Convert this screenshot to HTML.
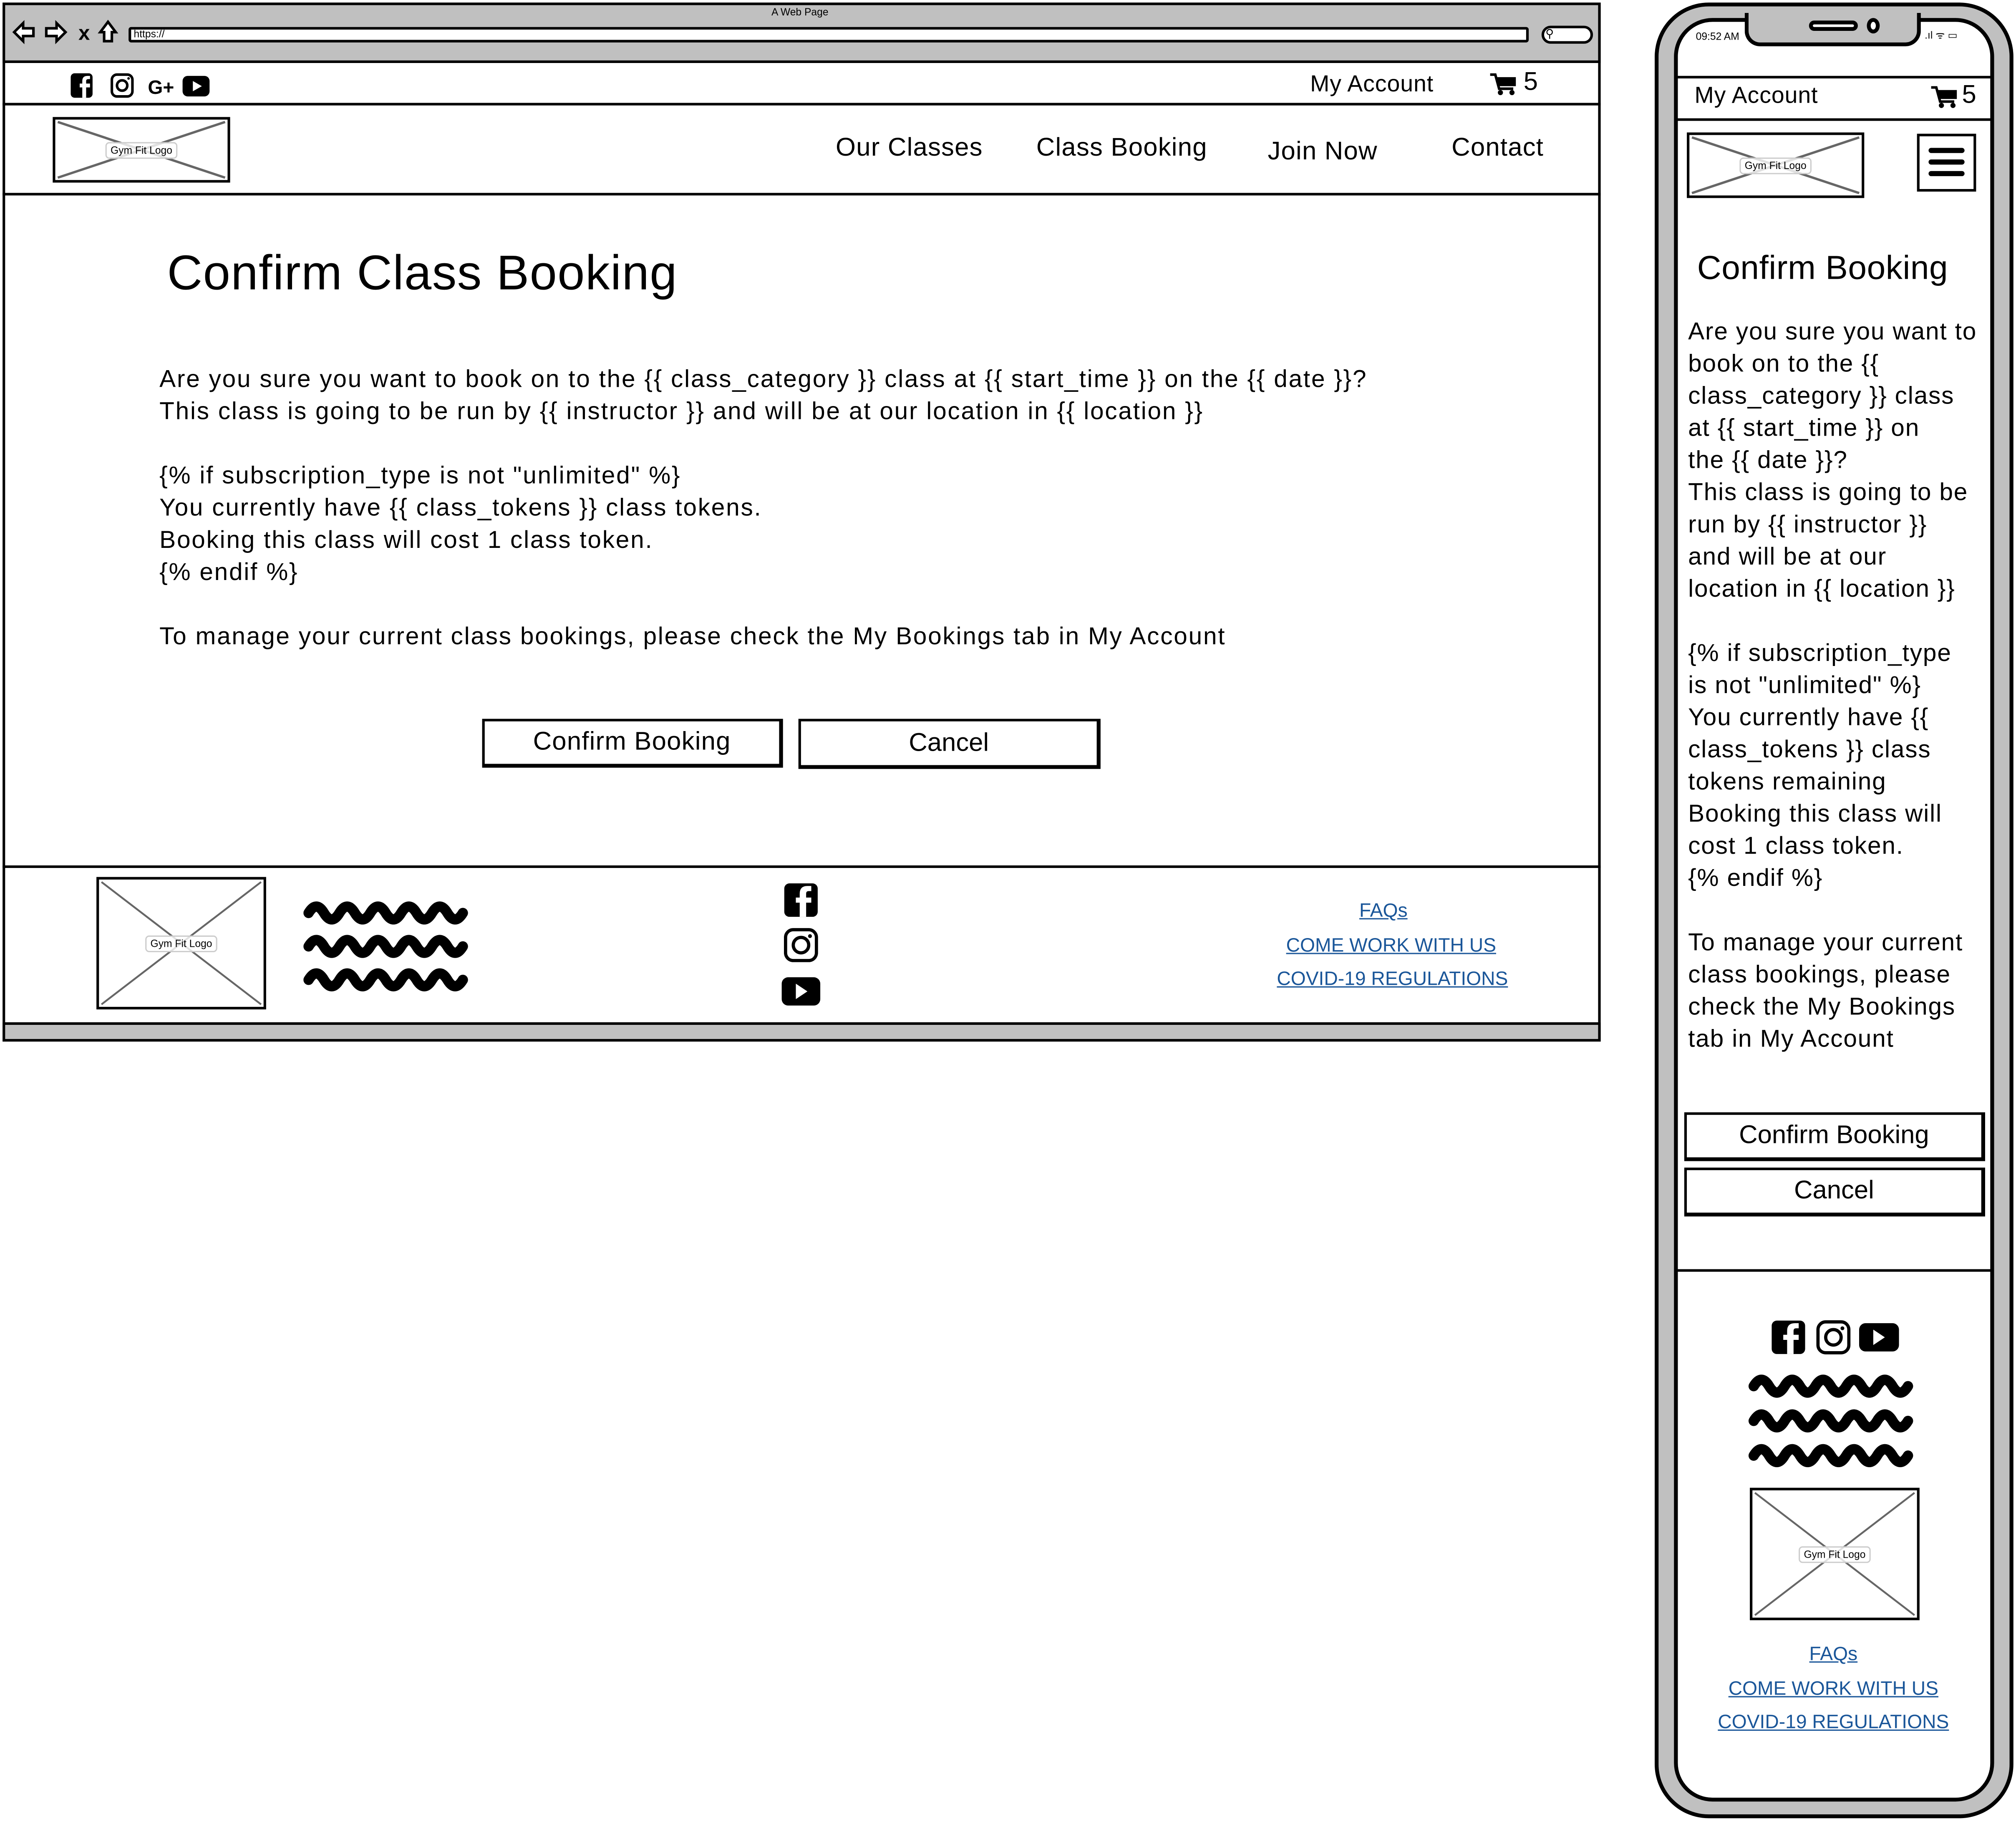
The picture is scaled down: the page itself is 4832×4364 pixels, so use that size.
<!DOCTYPE html>
<html><head><meta charset="utf-8">
<style>
html,body{margin:0;padding:0;background:#fff;width:4832px;height:4364px;overflow:hidden}
#w{position:absolute;left:0;top:0;width:1568px;height:1416px;transform:scale(3.0816);transform-origin:0 0;font-family:"Liberation Sans",sans-serif;color:#000}
.a{position:absolute}
.t{position:absolute;white-space:nowrap}
.box{position:absolute;border:2px solid #000;box-sizing:border-box;background:#fff}
.btn{position:absolute;border:2px solid #000;border-right-width:3px;border-bottom-width:3px;box-sizing:border-box;background:#fff;text-align:center;font-size:20px}
.lnk{position:absolute;color:#1a5699;text-decoration:underline;font-size:15px;white-space:nowrap;transform:translateX(-50%)}
.logo{position:absolute;border:2px solid #000;box-sizing:border-box;background:#fff}
.logo svg{position:absolute;left:0;top:0;width:100%;height:100%}
.logo span{position:absolute;left:50%;top:50%;transform:translate(-50%,-50%);font-size:8px;background:rgba(255,255,255,.8);border:1px solid #ccc;border-radius:3px;padding:1px 3px;white-space:nowrap}
p{margin:0}
</style></head><body><div id="w">

<!-- DESKTOP BROWSER -->
<div class="a" style="left:2px;top:2px;width:1243px;height:808px;border:2px solid #000;box-sizing:border-box;background:#fff"></div>
<div class="a" style="left:2px;top:2px;width:1243px;height:47px;background:#c0c0c0;border:2px solid #000;box-sizing:border-box"></div>
<div class="t" style="left:600px;top:5px;font-size:8px">A Web Page</div>
<svg class="a" style="left:8px;top:14px" width="90" height="22" viewBox="0 0 90 22">
<path d="M3 11 L10 4 L10 8 L18 8 L18 14 L10 14 L10 18 Z" fill="#fff" stroke="#000" stroke-width="2"/>
<path d="M43 11 L36 4 L36 8 L28 8 L28 14 L36 14 L36 18 Z" fill="#fff" stroke="#000" stroke-width="2"/>
<text x="53" y="17" font-size="16" font-weight="bold" font-family="Liberation Sans">x</text>
<path d="M76 3 L70 11 L73 11 L73 18 L79 18 L79 11 L82 11 Z" fill="#fff" stroke="#000" stroke-width="2"/>
</svg>
<div class="a" style="left:100px;top:21px;width:1089px;height:12px;background:#fff;border:2px solid #000;border-radius:2px;box-sizing:border-box"></div>
<div class="t" style="left:104px;top:22px;font-size:8px">https://</div>
<div class="a" style="left:1199px;top:20px;width:40px;height:14px;background:#fff;border:2px solid #000;border-radius:8px;box-sizing:border-box"></div>
<div class="t" style="left:1202px;top:21px;font-size:9px">&#9906;</div>

<!-- top social row -->
<div class="a" style="left:2px;top:80px;width:1243px;height:2px;background:#000"></div>
<svg class="a" style="left:54px;top:56px" width="112" height="22" viewBox="0 0 112 22">
<rect x="1" y="1" width="17" height="19" rx="3" fill="#000"/>
<path d="M13 20 V12 H16 V9 H13 V7 Q13 5.5 15 5.5 H16 V3 H14 Q10 3 10 7 V9 H8 V12 H10 V20 Z" fill="#fff"/>
<rect x="33" y="2" width="16" height="17" rx="4" fill="none" stroke="#000" stroke-width="2"/>
<circle cx="41" cy="10.5" r="4" fill="none" stroke="#000" stroke-width="2"/>
<circle cx="46" cy="5" r="1" fill="#000"/>
<text x="61" y="17" font-size="15" font-weight="bold" font-family="Liberation Sans">G+</text>
<rect x="88" y="3" width="21" height="16" rx="4" fill="#000"/>
<path d="M96 7 L103 11 L96 15 Z" fill="#fff"/>
</svg>
<div class="t" style="left:1019px;top:55px;font-size:18px;letter-spacing:0.3px">My Account</div>
<svg class="a" style="left:1159px;top:57px" width="22" height="18" viewBox="0 0 22 18">
<path d="M0 1 H4 L7 12 H18" fill="none" stroke="#000" stroke-width="2"/>
<path d="M5 3 H20 V10 H7 Z" fill="#000"/><circle cx="8" cy="15" r="2"/><circle cx="17" cy="15" r="2"/></svg>
<div class="t" style="left:1185px;top:53px;font-size:20px">5</div>

<!-- nav -->
<div class="a" style="left:2px;top:150px;width:1243px;height:2px;background:#000"></div>
<div class="logo" style="left:41px;top:91px;width:138px;height:51px"><svg viewBox="0 0 138 51" preserveAspectRatio="none"><path d="M2 2 L136 49 M136 2 L2 49" stroke="#666" stroke-width="2"/></svg><span>Gym Fit Logo</span></div>
<div class="t" style="left:650px;top:104px;font-size:20px;letter-spacing:0.4px">Our Classes</div>
<div class="t" style="left:806px;top:104px;font-size:20px;letter-spacing:0.4px">Class Booking</div>
<div class="t" style="left:986px;top:107px;font-size:20px;letter-spacing:0.4px">Join Now</div>
<div class="t" style="left:1129px;top:104px;font-size:20px;letter-spacing:0.4px">Contact</div>

<!-- content -->
<div class="t" style="left:130px;top:192px;font-size:38px;letter-spacing:0.5px">Confirm Class Booking</div>
<div class="a" style="left:124px;top:283px;font-size:19px;line-height:25px;white-space:nowrap;letter-spacing:0.9px">
<p>Are you sure you want to book on to the {{ class_category }} class at {{ start_time }} on the {{ date }}?</p>
<p>This class is going to be run by {{ instructor }} and will be at our location in {{ location }}</p>
<p>&nbsp;</p>
<p>{% if subscription_type is not "unlimited" %}</p>
<p>You currently have {{ class_tokens }} class tokens.</p>
<p>Booking this class will cost 1 class token.</p>
<p>{% endif %}</p>
<p>&nbsp;</p>
<p>To manage your current class bookings, please check the My Bookings tab in My Account</p>
</div>
<div class="btn" style="left:375px;top:559px;width:234px;height:38px;line-height:33px;letter-spacing:0.4px">Confirm Booking</div>
<div class="btn" style="left:621px;top:559px;width:235px;height:39px;line-height:34px">Cancel</div>

<!-- footer -->
<div class="a" style="left:2px;top:673px;width:1243px;height:2px;background:#000"></div>
<div class="logo" style="left:75px;top:682px;width:132px;height:103px"><svg viewBox="0 0 132 103" preserveAspectRatio="none"><path d="M2 2 L130 101 M130 2 L2 101" stroke="#666" stroke-width="1.5"/></svg><span>Gym Fit Logo</span></div>
<svg class="a" style="left:236px;top:696px" width="130" height="76" viewBox="0 0 130 76">
<g fill="none" stroke="#000" stroke-width="8" stroke-linecap="round">
<path d="M4 14 Q10 4 16 14 T28 14 T40 14 T52 14 T64 14 T76 14 T88 14 T100 14 T112 14 T124 14"/>
<path d="M4 40 Q10 30 16 40 T28 40 T40 40 T52 40 T64 40 T76 40 T88 40 T100 40 T112 40 T124 40"/>
<path d="M4 66 Q10 56 16 66 T28 66 T40 66 T52 66 T64 66 T76 66 T88 66 T100 66 T112 66 T124 66"/>
</g></svg>
<svg class="a" style="left:607px;top:685px" width="32" height="100" viewBox="0 0 32 100">
<rect x="3" y="2" width="26" height="26" rx="4"/>
<path d="M20 28 V17 H24 V13 H20 V10 Q20 8 22 8 H24 V4 H21 Q15 4 15 10 V13 H12 V17 H15 V28 Z" fill="#fff"/>
<rect x="4" y="38" width="24" height="24" rx="6" fill="none" stroke="#000" stroke-width="2.5"/>
<circle cx="16" cy="50" r="6" fill="none" stroke="#000" stroke-width="2.5"/><circle cx="23" cy="43" r="1.5"/>
<rect x="1" y="75" width="30" height="22" rx="5"/><path d="M12 80 L21 86 L12 92 Z" fill="#fff"/>
</svg>
<div class="lnk" style="left:1076px;top:700px">FAQs</div>
<div class="lnk" style="left:1082px;top:727px">COME WORK WITH US</div>
<div class="lnk" style="left:1083px;top:753px">COVID-19 REGULATIONS</div>
<div class="a" style="left:2px;top:795px;width:1243px;height:15px;background:#c0c0c0;border:2px solid #000;box-sizing:border-box"></div>

<!-- PHONE -->
<div class="a" style="left:1287px;top:2px;width:279px;height:1412px;background:#c0c0c0;border:3px solid #000;border-radius:42px;box-sizing:border-box"></div>
<div class="a" style="left:1302px;top:14px;width:249px;height:1387px;background:#fff;border:3px solid #000;border-radius:30px;box-sizing:border-box"></div>
<!-- notch -->
<div class="a" style="left:1357px;top:10px;width:137px;height:26px;background:#c0c0c0;border:3px solid #000;border-top:none;border-radius:0 0 12px 12px;box-sizing:border-box"></div>
<div class="a" style="left:1407px;top:16px;width:38px;height:8px;background:#fff;border:3px solid #000;border-radius:5px;box-sizing:border-box"></div>
<div class="a" style="left:1452px;top:14px;width:10px;height:12px;background:#fff;border:3px solid #000;border-radius:50%;box-sizing:border-box"></div>
<div class="t" style="left:1319px;top:24px;font-size:8px">09:52 AM</div>
<div class="t" style="left:1497px;top:22px;font-size:8px">.ıl ᯤ ▭</div>
<div class="a" style="left:1304px;top:59px;width:245px;height:2px;background:#000"></div>
<div class="a" style="left:1304px;top:92px;width:245px;height:2px;background:#000"></div>
<div class="t" style="left:1318px;top:64px;font-size:18px;letter-spacing:0.3px">My Account</div>
<svg class="a" style="left:1502px;top:67px" width="22" height="18" viewBox="0 0 22 18">
<path d="M0 1 H4 L7 12 H18" fill="none" stroke="#000" stroke-width="2"/>
<path d="M5 3 H20 V10 H7 Z" fill="#000"/><circle cx="8" cy="15" r="2"/><circle cx="17" cy="15" r="2"/></svg>
<div class="t" style="left:1526px;top:63px;font-size:20px">5</div>
<div class="logo" style="left:1312px;top:103px;width:138px;height:51px"><svg viewBox="0 0 138 51" preserveAspectRatio="none"><path d="M2 2 L136 49 M136 2 L2 49" stroke="#666" stroke-width="2"/></svg><span>Gym Fit Logo</span></div>
<div class="box" style="left:1491px;top:104px;width:46px;height:45px"></div>
<div class="a" style="left:1500px;top:115px;width:28px;height:4px;background:#000;border-radius:2px"></div>
<div class="a" style="left:1500px;top:124px;width:28px;height:4px;background:#000;border-radius:2px"></div>
<div class="a" style="left:1500px;top:133px;width:28px;height:4px;background:#000;border-radius:2px"></div>
<div class="t" style="left:1320px;top:193px;font-size:26px;letter-spacing:0.2px">Confirm Booking</div>
<div class="a" style="left:1313px;top:246px;font-size:19px;line-height:25px;white-space:nowrap;letter-spacing:0.6px">
<p>Are you sure you want to</p><p>book on to the {{</p><p>class_category }} class</p><p>at {{ start_time }} on</p><p>the {{ date }}?</p><p>This class is going to be</p><p>run by {{ instructor }}</p><p>and will be at our</p><p>location in {{ location }}</p><p>&nbsp;</p><p>{% if subscription_type</p><p>is not "unlimited" %}</p><p>You currently have {{</p><p>class_tokens }} class</p><p>tokens remaining</p><p>Booking this class will</p><p>cost 1 class token.</p><p>{% endif %}</p><p>&nbsp;</p><p>To manage your current</p><p>class bookings, please</p><p>check the My Bookings</p><p>tab in My Account</p>
</div>
<div class="btn" style="left:1310px;top:865px;width:234px;height:38px;line-height:33px">Confirm Booking</div>
<div class="btn" style="left:1310px;top:908px;width:234px;height:38px;line-height:33px">Cancel</div>
<div class="a" style="left:1304px;top:987px;width:245px;height:2px;background:#000"></div>
<svg class="a" style="left:1377px;top:1026px" width="102" height="28" viewBox="0 0 102 28">
<rect x="1" y="1" width="26" height="26" rx="4"/>
<path d="M18 27 V16 H22 V12 H18 V9 Q18 7 20 7 H22 V3 H19 Q13 3 13 9 V12 H10 V16 H13 V27 Z" fill="#fff"/>
<rect x="37" y="2" width="24" height="24" rx="6" fill="none" stroke="#000" stroke-width="2.5"/>
<circle cx="49" cy="14" r="6" fill="none" stroke="#000" stroke-width="2.5"/><circle cx="56" cy="7" r="1.5"/>
<rect x="69" y="3" width="31" height="22" rx="5"/><path d="M80 8 L89 14 L80 20 Z" fill="#fff"/>
</svg>
<svg class="a" style="left:1360px;top:1068px" width="130" height="76" viewBox="0 0 130 76">
<g fill="none" stroke="#000" stroke-width="8" stroke-linecap="round">
<path d="M4 10 Q10 0 16 10 T28 10 T40 10 T52 10 T64 10 T76 10 T88 10 T100 10 T112 10 T124 10"/>
<path d="M4 37 Q10 27 16 37 T28 37 T40 37 T52 37 T64 37 T76 37 T88 37 T100 37 T112 37 T124 37"/>
<path d="M4 64 Q10 54 16 64 T28 64 T40 64 T52 64 T64 64 T76 64 T88 64 T100 64 T112 64 T124 64"/>
</g></svg>
<div class="logo" style="left:1361px;top:1157px;width:132px;height:103px"><svg viewBox="0 0 132 103" preserveAspectRatio="none"><path d="M2 2 L130 101 M130 2 L2 101" stroke="#666" stroke-width="1.5"/></svg><span>Gym Fit Logo</span></div>
<div class="lnk" style="left:1426px;top:1278px">FAQs</div>
<div class="lnk" style="left:1426px;top:1305px">COME WORK WITH US</div>
<div class="lnk" style="left:1426px;top:1331px">COVID-19 REGULATIONS</div>

</div></body></html>
